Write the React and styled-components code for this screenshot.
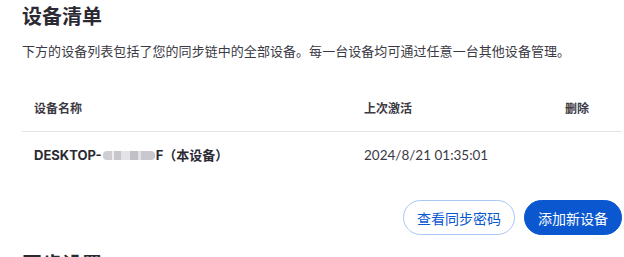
import React from "react";
import styled, { createGlobalStyle } from "styled-components";

const Global = createGlobalStyle`
  html, body { margin: 0; padding: 0; background: #fff; }
  body { font-family: Inter, "Noto Sans CJK SC", sans-serif; color: #2b2a33; overflow: hidden; }
`;

const Page = styled.div`
  padding: 1px 2px 0 22px;
  display: flex;
  flex-direction: column;
`;

const Title = styled.h2`
  margin: 0;
  font-family: "Noto Sans CJK SC", sans-serif;
  font-size: 20px;
  line-height: 30px;
  font-weight: 700;
  color: #2b2a33;
`;

const Desc = styled.p`
  margin: 10px 0 0;
  font-family: "Noto Sans CJK SC", sans-serif;
  font-size: 13px;
  letter-spacing: 0.05px;
  line-height: 20px;
  color: #3b3a44;
`;

const Row = styled.div`
  display: grid;
  grid-template-columns: 330px 1fr auto;
  align-items: center;
  padding: ${(p) => (p.$head ? "0 33px 12px 12px" : "12px 33px 12px 12px")};
  margin-top: ${(p) => (p.$head ? "36px" : "0")};
  border-bottom: ${(p) => (p.$head ? "1px solid #e4e4e8" : "none")};
  line-height: 22px;
`;

const HeadCell = styled.div`
  font-family: "Noto Sans CJK SC", sans-serif;
  font-size: 12px;
  font-weight: 700;
  color: #3b3a44;
`;

const NameCell = styled.div`
  font-family: Inter, "Noto Sans CJK SC", sans-serif;
  font-size: 13px;
  font-weight: 700;
  color: #2b2a33;
  display: flex;
  align-items: center;
`;

const Blur = styled.span`
  display: inline-block;
  width: 52px;
  height: 9px;
  margin: 0 1px;
  background: linear-gradient(
    90deg,
    #cdcdd2 0 9px,
    #ededf0 9px 11px,
    #c6c6cc 11px 18px,
    #e4e4e8 18px 27px,
    #c0c0c6 27px 35px,
    #e2e2e6 35px 38px,
    #c8c8ce 38px 52px
  );
  filter: blur(0.7px);
  border-radius: 4px;
`;

const DateCell = styled.div`
  font-family: Lato, sans-serif;
  font-size: 13.5px;
  color: #3b3a44;
`;

const Actions = styled.div`
  display: flex;
  justify-content: flex-end;
  gap: 9px;
  margin-top: 22px;
`;

const Button = styled.button`
  height: 35px;
  padding: 0 13px;
  border-radius: 18px;
  font-family: "Noto Sans CJK SC", sans-serif;
  font-size: 14px;
  cursor: pointer;
  border: 1px solid ${(p) => (p.$primary ? "#0b57d0" : "#a9c7f5")};
  background: ${(p) => (p.$primary ? "#0b57d0" : "#fff")};
  color: ${(p) => (p.$primary ? "#fff" : "#0b57d0")};
`;

const NextTitle = styled(Title)`
  margin-top: 14px;
`;

export default function App() {
  return (
    <>
      <Global />
      <Page>
        <Title>设备清单</Title>
        <Desc>
          下方的设备列表包括了您的同步链中的全部设备。每一台设备均可通过任意一台其他设备管理。
        </Desc>
        <Row $head>
          <HeadCell>设备名称</HeadCell>
          <HeadCell>上次激活</HeadCell>
          <HeadCell>删除</HeadCell>
        </Row>
        <Row>
          <NameCell>
            DESKTOP-<Blur />F（本设备）
          </NameCell>
          <DateCell>2024/8/21 01:35:01</DateCell>
          <div />
        </Row>
        <Actions>
          <Button>查看同步密码</Button>
          <Button $primary>添加新设备</Button>
        </Actions>
        <NextTitle>同步设置</NextTitle>
      </Page>
    </>
  );
}
